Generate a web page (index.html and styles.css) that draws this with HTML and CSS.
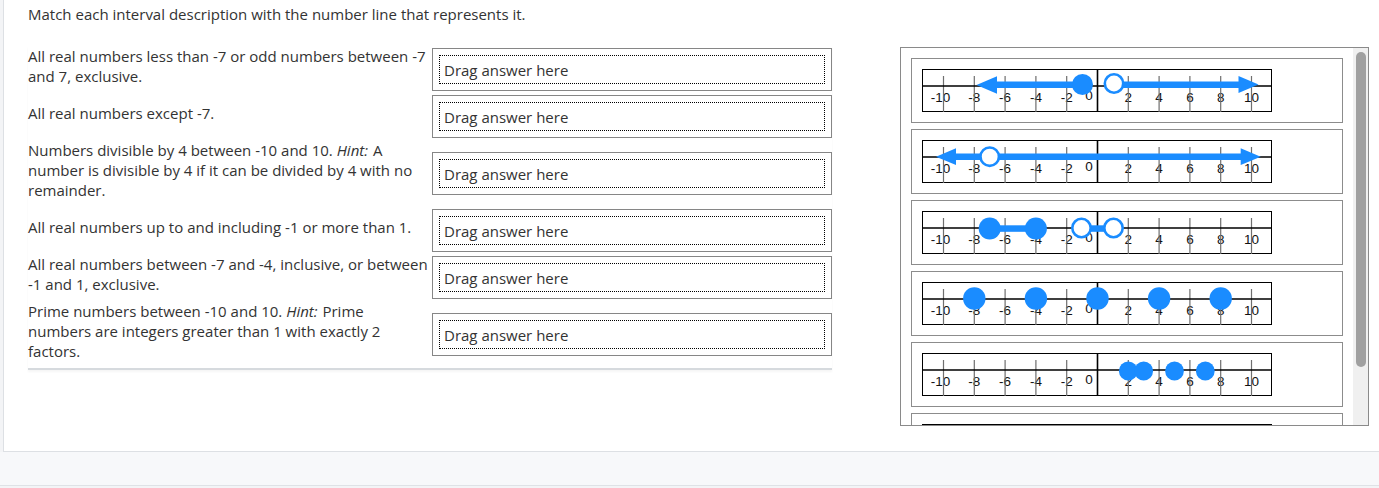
FILE: index.html
```html
<!DOCTYPE html>
<html lang="en">
<head>
<meta charset="utf-8">
<title>Match intervals</title>
<link rel="stylesheet" href="styles.css">
</head>
<body>
<div class="card">
  <p class="prompt">Match each interval description with the number line that represents it.</p>
  <div class="content">
    <div class="match">
      <div class="row">
        <div class="desc">All real numbers less than -7 or odd numbers between -7 and 7, exclusive.</div>
        <div class="drop"><div class="zone">Drag answer here</div></div>
      </div>
      <div class="row">
        <div class="desc">All real numbers except -7.</div>
        <div class="drop"><div class="zone">Drag answer here</div></div>
      </div>
      <div class="row">
        <div class="desc">Numbers divisible by 4 between -10 and 10. <em>Hint:</em> A number is divisible by 4 if it can be divided by 4 with no remainder.</div>
        <div class="drop"><div class="zone">Drag answer here</div></div>
      </div>
      <div class="row">
        <div class="desc">All real numbers up to and including -1 or more than 1.</div>
        <div class="drop"><div class="zone">Drag answer here</div></div>
      </div>
      <div class="row">
        <div class="desc">All real numbers between -7 and -4, inclusive, or between -1 and 1, exclusive.</div>
        <div class="drop"><div class="zone">Drag answer here</div></div>
      </div>
      <div class="row">
        <div class="desc">Prime numbers between -10 and 10. <em>Hint:</em> Prime numbers are integers greater than 1 with exactly 2 factors.</div>
        <div class="drop"><div class="zone">Drag answer here</div></div>
      </div>
    </div>

    <div class="bank">
      <div class="list">
        <div class="opt">
          <svg class="line" width="350" height="43" viewBox="0 0 350 43">
            <rect class="frame" x="0.5" y="0.5" width="349" height="42"/>
            <g class="labels"><text x="18.5" y="33">-10</text><text x="52.3" y="33">-8</text><text x="83.1" y="33">-6</text><text x="113.9" y="33">-4</text><text x="144.7" y="33">-2</text><text x="167" y="30.5">0</text><text x="206.3" y="33">2</text><text x="237.1" y="33">4</text><text x="267.9" y="33">6</text><text x="298.7" y="33">8</text><text x="329.5" y="33">10</text></g>
            <path class="ticks" d="M21.5 7V43M52.3 7V43M83.1 7V43M113.9 7V43M144.7 7V43M206.3 7V43M237.1 7V43M267.9 7V43M298.7 7V43M329.5 7V43"/>
            <path class="axis" d="M1 17H349M175.5 0V43"/>
            <g class="blue">
              <rect x="70" y="12.5" width="90" height="6.5"/>
              <polygon points="54.5,16 75,7.3 75,24.7"/>
              <circle cx="160.5" cy="15.5" r="10.5"/>
              <rect x="198" y="12.5" width="121" height="6.5"/>
              <polygon points="336.5,15.5 316.5,7 316.5,24"/>
            </g>
            <circle class="open" cx="192" cy="14.5" r="9.2"/>
          </svg>
        </div>
        <div class="opt">
          <svg class="line" width="350" height="43" viewBox="0 0 350 43">
            <rect class="frame" x="0.5" y="0.5" width="349" height="42"/>
            <g class="labels"><text x="18.5" y="33">-10</text><text x="52.3" y="33">-8</text><text x="83.1" y="33">-6</text><text x="113.9" y="33">-4</text><text x="144.7" y="33">-2</text><text x="167" y="30.5">0</text><text x="206.3" y="33">2</text><text x="237.1" y="33">4</text><text x="267.9" y="33">6</text><text x="298.7" y="33">8</text><text x="329.5" y="33">10</text></g>
            <path class="ticks" d="M21.5 7V43M52.3 7V43M83.1 7V43M113.9 7V43M144.7 7V43M206.3 7V43M237.1 7V43M267.9 7V43M298.7 7V43M329.5 7V43"/>
            <path class="axis" d="M1 17H349M175.5 0V43"/>
            <g class="blue">
              <rect x="30" y="13.5" width="292" height="6.5"/>
              <polygon points="14,16.7 34,8.3 34,25.1"/>
              <polygon points="338.7,16.7 318.7,8.3 318.7,25.1"/>
            </g>
            <circle class="open" cx="67.7" cy="16.7" r="9.2"/>
          </svg>
        </div>
        <div class="opt">
          <svg class="line" width="350" height="43" viewBox="0 0 350 43">
            <rect class="frame" x="0.5" y="0.5" width="349" height="42"/>
            <g class="labels"><text x="18.5" y="33">-10</text><text x="52.3" y="33">-8</text><text x="83.1" y="33">-6</text><text x="113.9" y="33">-4</text><text x="144.7" y="33">-2</text><text x="167" y="30.5">0</text><text x="206.3" y="33">2</text><text x="237.1" y="33">4</text><text x="267.9" y="33">6</text><text x="298.7" y="33">8</text><text x="329.5" y="33">10</text></g>
            <path class="ticks" d="M21.5 7V43M52.3 7V43M83.1 7V43M113.9 7V43M144.7 7V43M206.3 7V43M237.1 7V43M267.9 7V43M298.7 7V43M329.5 7V43"/>
            <path class="axis" d="M1 17H349M175.5 0V43"/>
            <g class="blue">
              <rect x="67.7" y="14.3" width="46.2" height="6.5"/>
              <circle cx="67.7" cy="17.5" r="11"/>
              <circle cx="113.9" cy="17.5" r="11"/>
              <rect x="165" y="14.3" width="21" height="6.5"/>
            </g>
            <circle class="open" cx="159.5" cy="17" r="9.2"/>
            <circle class="open" cx="191.5" cy="17" r="9.2"/>
          </svg>
        </div>
        <div class="opt">
          <svg class="line" width="350" height="43" viewBox="0 0 350 43">
            <rect class="frame" x="0.5" y="0.5" width="349" height="42"/>
            <g class="labels"><text x="18.5" y="33">-10</text><text x="52.3" y="33">-8</text><text x="83.1" y="33">-6</text><text x="113.9" y="33">-4</text><text x="144.7" y="33">-2</text><text x="167" y="30.5">0</text><text x="206.3" y="33">2</text><text x="237.1" y="33">4</text><text x="267.9" y="33">6</text><text x="298.7" y="33">8</text><text x="329.5" y="33">10</text></g>
            <path class="ticks" d="M21.5 7V43M52.3 7V43M83.1 7V43M113.9 7V43M144.7 7V43M206.3 7V43M237.1 7V43M267.9 7V43M298.7 7V43M329.5 7V43"/>
            <path class="axis" d="M1 17H349M175.5 0V43"/>
            <g class="blue">
              <circle cx="52.3" cy="16.5" r="11.2"/>
              <circle cx="113.9" cy="16.5" r="11.2"/>
              <circle cx="175.5" cy="16.5" r="11.2"/>
              <circle cx="237.1" cy="16.5" r="11.2"/>
              <circle cx="298.7" cy="16.5" r="11.2"/>
            </g>
          </svg>
        </div>
        <div class="opt">
          <svg class="line" width="350" height="43" viewBox="0 0 350 43">
            <rect class="frame" x="0.5" y="0.5" width="349" height="42"/>
            <g class="labels"><text x="18.5" y="33">-10</text><text x="52.3" y="33">-8</text><text x="83.1" y="33">-6</text><text x="113.9" y="33">-4</text><text x="144.7" y="33">-2</text><text x="167" y="30.5">0</text><text x="206.3" y="33">2</text><text x="237.1" y="33">4</text><text x="267.9" y="33">6</text><text x="298.7" y="33">8</text><text x="329.5" y="33">10</text></g>
            <path class="ticks" d="M21.5 7V43M52.3 7V43M83.1 7V43M113.9 7V43M144.7 7V43M206.3 7V43M237.1 7V43M267.9 7V43M298.7 7V43M329.5 7V43"/>
            <path class="axis" d="M1 17H349M175.5 0V43"/>
            <g class="blue">
              <circle cx="206.3" cy="18" r="9.4"/>
              <circle cx="221.7" cy="18" r="9.4"/>
              <circle cx="252.5" cy="18" r="9.4"/>
              <circle cx="283.3" cy="18" r="9.4"/>
            </g>
          </svg>
        </div>
        <div class="opt">
          <svg class="line" width="350" height="43" viewBox="0 0 350 43">
            <rect class="frame" x="0.5" y="0.5" width="349" height="42"/>
            <path class="axis" d="M1 17H349M175.5 0V43"/>
            <g class="blue">
              <rect x="30" y="13.5" width="30" height="6.5"/>
              <polygon points="14,16.7 34,8.3 34,25.1"/>
              <circle cx="98.5" cy="17" r="10"/>
              <circle cx="129.3" cy="17" r="10"/>
              <circle cx="160.1" cy="17" r="10"/>
              <circle cx="190.9" cy="17" r="10"/>
              <circle cx="221.7" cy="17" r="10"/>
              <circle cx="252.5" cy="17" r="10"/>
            </g>
            <circle class="open" cx="67.7" cy="17" r="9.2"/>
          </svg>
        </div>
      </div>
      <div class="scroll"><div class="thumb"></div></div>
    </div>
  </div>
</div>
<div class="footer"></div>
</body>
</html>
```

FILE: styles.css
```css
html, body {
  margin: 0;
  padding: 0;
}

body {
  background: #f3f4f6;
  font-family: "Open Sans", "Noto Sans", sans-serif;
  font-size: 15px;
  color: #333;
  overflow: hidden;
}

.card {
  margin-left: 3px;
  height: 452px;
  box-sizing: border-box;
  padding: 4px 0 0 24px;
  background: #fff;
  border-left: 1px solid #dde0e4;
  border-bottom: 1px solid #dde0e4;
}

.prompt {
  margin: 0;
  line-height: 20px;
}

.content {
  display: flex;
  align-items: flex-start;
  margin-top: 22px;
}

.match {
  width: 804px;
  flex: none;
  border-bottom: 2px solid #d6dade;
  box-shadow: 0 2px 2px rgba(0, 0, 0, 0.04);
}

.row {
  display: flex;
  align-items: center;
}

.desc {
  width: 400px;
  padding-right: 4px;
  padding-bottom: 7px;
  line-height: 20px;
}

.desc em {
  font-style: italic;
  padding-right: 1px;
}

.drop {
  width: 400px;
  height: 43px;
  margin: 2px 0;
  box-sizing: border-box;
  border: 1px solid #868686;
  padding: 6px;
  background: #fff;
}

.zone {
  height: 29px;
  box-sizing: border-box;
  border: 1px dotted #000;
  padding-left: 4px;
  line-height: 28px;
  color: #333;
}

.bank {
  flex: none;
  display: flex;
  width: 469px;
  height: 379px;
  margin-left: 68px;
  margin-top: 1px;
  box-sizing: border-box;
  border: 1px solid #8a8a8a;
  overflow: hidden;
  background: #fff;
}

.list {
  flex: 1;
  min-width: 0;
  padding: 10px;
  overflow: hidden;
}

.scroll {
  flex: none;
  width: 15px;
  box-sizing: border-box;
  padding: 4px 2px 0 3px;
  background: #f0f0f0;
}

.thumb {
  height: 315px;
  border-radius: 5px;
  background: #a0a0a0;
}

.opt {
  height: 65px;
  box-sizing: border-box;
  border: 1px solid #8c8c8c;
  padding: 10px;
  margin-bottom: 6px;
  background: #fff;
}

.opt:last-child {
  margin-bottom: 0;
}

.line {
  display: block;
}

.frame {
  fill: #fff;
  stroke: #000;
  stroke-width: 1;
}

.labels {
  font-family: "Liberation Sans", Arial, sans-serif;
  font-size: 13.5px;
  text-anchor: middle;
  fill: #111;
}

.ticks {
  stroke: #6f6f6f;
  stroke-width: 1.2;
  fill: none;
}

.axis {
  stroke: #000;
  stroke-width: 1.6;
  fill: none;
}

.blue {
  fill: #1a8cff;
}

.open {
  fill: #fff;
  stroke: #1a8cff;
  stroke-width: 2.6;
}

.footer {
  height: 33px;
  background: #f7f8fa;
  border-bottom: 1px solid #dfe2e6;
}
```
